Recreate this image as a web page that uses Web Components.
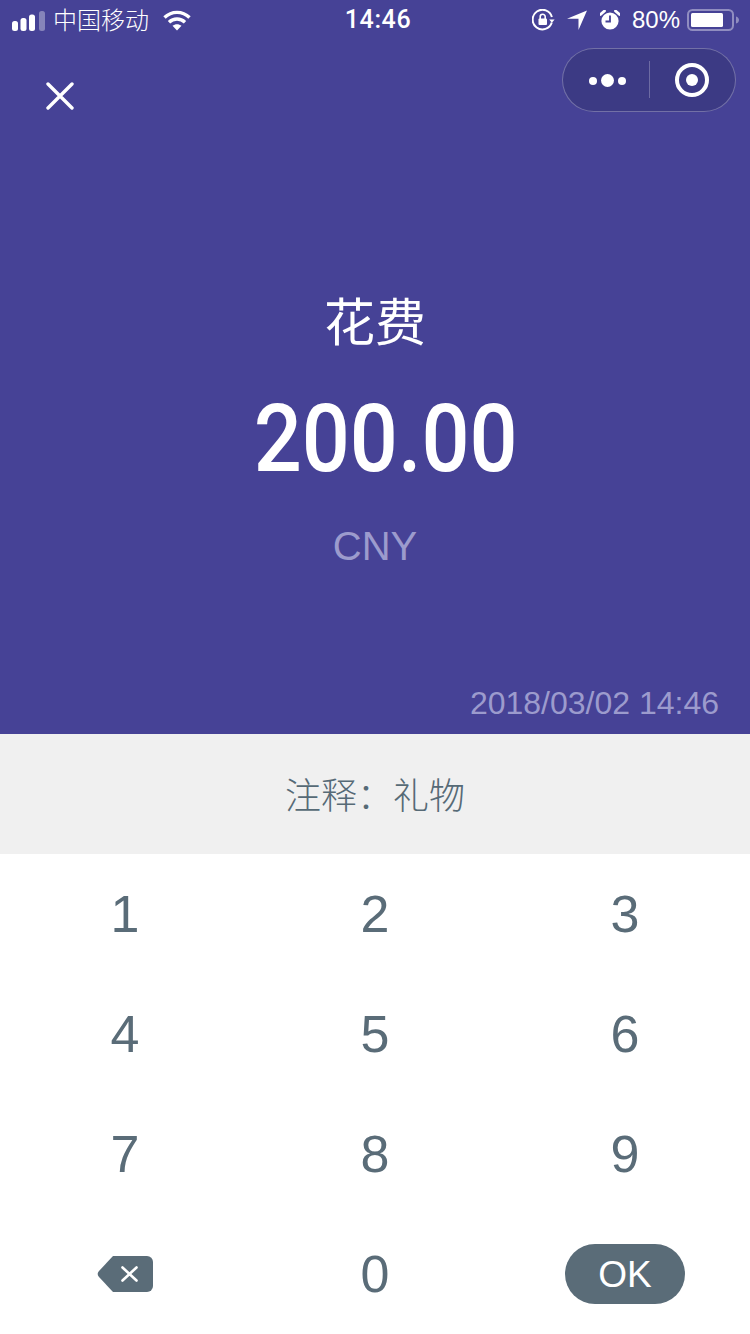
<!DOCTYPE html>
<html lang="zh">
<head>
<meta charset="utf-8">
<title>花费</title>
<style>
    html, body { margin: 0; padding: 0; background: #fff; }
    body { width: 750px; height: 1334px; overflow: hidden; font-family: "Liberation Sans", "Noto Sans CJK SC", sans-serif; }
</style>
</head>
<body>
<pay-screen>
    <pay-header title-text="花费" amount="200.00" currency="CNY" date="2018/03/02 14:46"></pay-header>
    <note-bar>注释：礼物</note-bar>
    <key-pad></key-pad>
</pay-screen>

<script>
class PayScreen extends HTMLElement {
    constructor() {
        super();
        const shadow = this.attachShadow({ mode: 'open' });
        shadow.innerHTML = `
            <style>
                :host { display: flex; flex-direction: column; width: 750px; height: 1334px; }
            </style>
            <slot></slot>
        `;
    }
}

class StatusBar extends HTMLElement {
    constructor() {
        super();
        const shadow = this.attachShadow({ mode: 'open' });
        shadow.innerHTML = `
            <style>
                :host {
                    display: grid;
                    grid-template-columns: 1fr auto 1fr;
                    align-items: center;
                    height: 40px;
                    color: #fff;
                    font-size: 24px;
                    font-family: "Noto Sans CJK SC", sans-serif;
                }
                .left, .right { display: flex; align-items: center; }
                .left { padding-left: 12px; }
                .right { justify-content: flex-end; padding-right: 11px; }
                svg { display: block; flex: none; }
                .carrier { margin-left: 8px; margin-right: 14px; font-weight: 300; line-height: 38px; height: 40px; }
                .time { font: 500 25px/40px Roboto, sans-serif; letter-spacing: .6px; margin-left: 6px; }
                .pct { font: 400 24px/40px "Liberation Sans", sans-serif; margin: 0 7px 0 12px; }
            </style>
            <div class="left">
                <svg width="33" height="21" viewBox="0 0 33 21" fill="#fff">
                    <rect x="0" y="11" width="6" height="10" rx="2.5"/>
                    <rect x="8.5" y="8" width="6" height="13" rx="2.5"/>
                    <rect x="17" y="4.5" width="6" height="16.5" rx="2.5"/>
                    <rect x="27" y="1" width="6" height="20" rx="2.5" opacity=".35"/>
                </svg>
                <span class="carrier">中国移动</span>
                <svg width="28" height="21" viewBox="0 0 28 21" fill="none" stroke="#fff" stroke-width="3.4">
                    <path d="M1.5 7.5C8.5 .6 19.500 .6 26.500 7.500"/>
                    <path d="M6 12.200C10.500 8 17.500 8 22 12.200"/>
                    <path d="M14 20.500L9.500 15.800C12 13.700 16 13.700 18.500 15.800Z" fill="#fff" stroke="none"/>
                </svg>
            </div>
            <span class="time">14:46</span>
            <div class="right">
                <svg width="23" height="22" viewBox="0 0 23 22" fill="none" stroke="#fff" stroke-width="2">
                    <path d="M19.800 13.500A9.800 9.800 0 1 1 19.900 8"/>
                    <path d="M17.200 10.500h5.400l-2.700 3.300z" fill="#fff" stroke="none"/>
                    <rect x="6.500" y="9.500" width="8.500" height="6.500" rx="1" fill="#fff" stroke="none"/>
                    <path d="M8.200 10V7.800a2.500 2.500 0 0 1 5 0V10" stroke-width="1.600"/>
                </svg>
                <svg style="margin-left:12px" width="20" height="20" viewBox="0 0 20 20" fill="#fff">
                    <path d="M20 .5L11.500 20V8.800L0 8.800Z"/>
                </svg>
                <svg style="margin-left:13px" width="20" height="20" viewBox="0 0 20 20">
                    <circle cx="10" cy="11" r="8.600" fill="#fff"/>
                    <path d="M10 5.500V11.500H5.500" fill="none" stroke="#464296" stroke-width="1.800"/>
                    <path d="M.5 4.500L4.500 1M19.500 4.500L15.500 1" fill="none" stroke="#fff" stroke-width="2.800" stroke-linecap="round"/>
                </svg>
                <span class="pct">80%</span>
                <svg width="52" height="22" viewBox="0 0 52 22">
                    <rect x="1" y="1" width="45" height="20" rx="4.500" fill="none" stroke="#fff" stroke-opacity=".4" stroke-width="2"/>
                    <rect x="4" y="4" width="32" height="14" rx="1.500" fill="#fff"/>
                    <path d="M49 7.500c2 .5 3 2 3 3.500s-1 3-3 3.500z" fill="#fff" fill-opacity=".4"/>
                </svg>
            </div>
        `;
    }
}

class CapsuleMenu extends HTMLElement {
    constructor() {
        super();
        const shadow = this.attachShadow({ mode: 'open' });
        shadow.innerHTML = `
            <style>
                :host {
                    display: flex;
                    align-items: center;
                    box-sizing: border-box;
                    width: 174px;
                    height: 64px;
                    border-radius: 32px;
                    background: #3c3a84;
                    border: 1px solid rgba(255, 255, 255, .28);
                }
                svg { display: block; }
            </style>
            <svg width="172" height="62" viewBox="563 49 172 62">
                <circle cx="593" cy="81" r="4" fill="#fff"/>
                <circle cx="607.500" cy="80.500" r="6.500" fill="#fff"/>
                <circle cx="622" cy="81" r="4" fill="#fff"/>
                <path d="M649.500 61V98" stroke="#fff" stroke-opacity=".25" stroke-width="1"/>
                <circle cx="692" cy="80" r="15" fill="none" stroke="#fff" stroke-width="4"/>
                <circle cx="692" cy="80" r="6" fill="#fff"/>
            </svg>
        `;
    }
}

class PayHeader extends HTMLElement {
    constructor() {
        super();
        const shadow = this.attachShadow({ mode: 'open' });
        shadow.innerHTML = `
            <style>
                :host {
                    display: flex;
                    flex-direction: column;
                    flex: none;
                    height: 734px;
                    background: #464296;
                    color: #fff;
                }
                .nav {
                    display: flex;
                    justify-content: space-between;
                    align-items: flex-start;
                    padding: 8px 14px 0 46px;
                    height: 72px;
                }
                .close { display: block; margin-top: 34px; }
                .hero {
                    flex: 1;
                    display: flex;
                    flex-direction: column;
                    align-items: center;
                    padding-top: 164px;
                }
                .title {
                    font: 400 51px/70px "Noto Sans CJK SC", sans-serif;
                }
                .amount {
                    font: 500 94px/112px Roboto, sans-serif;
                    margin-top: 29px;
                    margin-left: 22px;
                    transform: scaleX(.9);
                    white-space: nowrap;
                }
                .currency {
                    font: 400 40px/48px "Liberation Sans", sans-serif;
                    color: #9c9bcd;
                    margin-top: 27px;
                }
                .date {
                    font: 400 32px/36px "Liberation Sans", sans-serif;
                    color: #9c9bcd;
                    text-align: right;
                    padding: 0 31px 13px 0;
                }
            </style>
            <status-bar></status-bar>
            <div class="nav">
                <svg class="close" width="28" height="28" viewBox="0 0 28 28" fill="none" stroke="#fff" stroke-width="3.400" stroke-linecap="round">
                    <path d="M2 2L26 26M26 2L2 26"/>
                </svg>
                <capsule-menu></capsule-menu>
            </div>
            <div class="hero">
                <div class="title"></div>
                <div class="amount"></div>
                <div class="currency"></div>
            </div>
            <div class="date"></div>
        `;
    }

    connectedCallback() {
        const shadow = this.shadowRoot;
        shadow.querySelector('.title').textContent = this.getAttribute('title-text') || '';
        shadow.querySelector('.amount').textContent = this.getAttribute('amount') || '';
        shadow.querySelector('.currency').textContent = this.getAttribute('currency') || '';
        shadow.querySelector('.date').textContent = this.getAttribute('date') || '';
    }
}

class NoteBar extends HTMLElement {
    constructor() {
        super();
        const shadow = this.attachShadow({ mode: 'open' });
        shadow.innerHTML = `
            <style>
                :host {
                    display: flex;
                    flex: none;
                    align-items: center;
                    justify-content: center;
                    height: 120px;
                    padding-bottom: 2px;
                    box-sizing: border-box;
                    background: #f0f0f0;
                    color: #566a76;
                    font: 300 36px/1 "Noto Sans CJK SC", sans-serif;
                }
            </style>
            <slot></slot>
        `;
    }
}

class KeyButton extends HTMLElement {
    constructor() {
        super();
        const shadow = this.attachShadow({ mode: 'open' });
        shadow.innerHTML = `
            <style>
                :host {
                    display: flex;
                    align-items: center;
                    justify-content: center;
                    color: #5a6c78;
                    font: 400 52px/1 "Liberation Sans", sans-serif;
                }
            </style>
            <slot></slot>
        `;
    }
}

class KeyPad extends HTMLElement {
    constructor() {
        super();
        const shadow = this.attachShadow({ mode: 'open' });
        const digits = ['1', '2', '3', '4', '5', '6', '7', '8', '9'];
        shadow.innerHTML = `
            <style>
                :host {
                    display: grid;
                    flex: none;
                    grid-template-columns: repeat(3, 250px);
                    grid-auto-rows: 120px;
                    background: #fff;
                }
                svg { display: block; margin-right: 1px; }
                .ok {
                    display: flex;
                    align-items: center;
                    justify-content: center;
                    width: 120px;
                    height: 60px;
                    border-radius: 30px;
                    background: #5a6c78;
                    color: #fff;
                    font: 400 37px/1 "Liberation Sans", sans-serif;
                }
            </style>
            ${digits.map((d) => `<key-button>${d}</key-button>`).join('')}
            <key-button>
                <svg width="56" height="36" viewBox="0 0 56 36">
                    <path d="M16 0H50a6 6 0 0 1 6 6V30a6 6 0 0 1-6 6H16L2 21a4.500 4.500 0 0 1 0-6Z" fill="#5a6c78"/>
                    <path d="M25.500 11.500L39.500 24.500M39.500 11.500L25.500 24.500" fill="none" stroke="#fff" stroke-width="2.600" stroke-linecap="round"/>
                </svg>
            </key-button>
            <key-button>0</key-button>
            <key-button><span class="ok">OK</span></key-button>
        `;
    }
}

customElements.define('pay-screen', PayScreen);
customElements.define('status-bar', StatusBar);
customElements.define('capsule-menu', CapsuleMenu);
customElements.define('pay-header', PayHeader);
customElements.define('note-bar', NoteBar);
customElements.define('key-button', KeyButton);
customElements.define('key-pad', KeyPad);
</script>
</body>
</html>
